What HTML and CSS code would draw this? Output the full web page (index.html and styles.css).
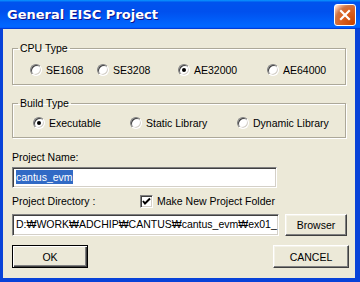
FILE: index.html
```html
<!DOCTYPE html>
<html lang="en">
  <head>
    <meta charset="UTF-8" />
    <title>General EISC Project</title>
    <link rel="stylesheet" href="styles.css">
  </head>
  <body>
    <div class="window">
      <div class="titlebar">
        <span class="title">General EISC Project</span>
        <button class="close" aria-label="Close">
          <svg width="12" height="12" viewBox="0 0 12 12"><path d="M2 2 L10 10 M10 2 L2 10" stroke="#fff" stroke-width="2.2" stroke-linecap="square"/></svg>
        </button>
      </div>

      <div class="client">
        <!-- CPU Type -->
        <fieldset class="group cpu">
          <legend>CPU Type</legend>
          <div class="options">
            <label class="opt"><span class="radio"></span>SE1608</label>
            <label class="opt"><span class="radio"></span>SE3208</label>
            <label class="opt"><span class="radio on"></span>AE32000</label>
            <label class="opt"><span class="radio"></span>AE64000</label>
          </div>
        </fieldset>

        <!-- Build Type -->
        <fieldset class="group build">
          <legend>Build Type</legend>
          <div class="options">
            <label class="opt"><span class="radio on"></span>Executable</label>
            <label class="opt"><span class="radio"></span>Static Library</label>
            <label class="opt"><span class="radio"></span>Dynamic Library</label>
          </div>
        </fieldset>

        <div class="field-label">Project Name:</div>
        <div class="textbox name-box"><span class="sel">cantus_evm</span></div>

        <div class="dir-row">
          <span class="dir-label">Project Directory :</span>
          <label class="check">
            <span class="checkbox">
              <svg width="9" height="9" viewBox="0 0 9 9"><path d="M1 4 L3 6.5 L8 1.5" fill="none" stroke="#000" stroke-width="2"/></svg>
            </span>
            Make New Project Folder
          </label>
        </div>

        <div class="dir-line">
          <div class="textbox dir-box">D:₩WORK₩ADCHIP₩CANTUS₩cantus_evm₩ex01_</div>
          <button class="btn browse">Browser</button>
        </div>

        <div class="actions">
          <button class="btn default">OK</button>
          <button class="btn">CANCEL</button>
        </div>
      </div>
    </div>
  </body>
</html>
```

FILE: styles.css
```css
body {
  margin: 0;
  padding: 0;
  font-family: 'Liberation Sans', Arial, sans-serif;
  font-size: 10.5px;
  color: #000;
}

.window {
  width: 360px;
  height: 282px;
  background-color: #0842d8;
  display: flex;
  flex-direction: column;
}

.titlebar {
  height: 29px;
  display: flex;
  align-items: center;
  justify-content: space-between;
  padding: 0 4px 0 7px;
  box-sizing: border-box;
  background: linear-gradient(180deg, #0997ff, #0053ee 8%, #0050ee 40%, #0066ff 88%, #0066ff 93%, #005bff 95%, #003dd7 96%, #003dd7);
}

.title {
  color: #fff;
  font-family: 'DejaVu Sans', sans-serif;
  font-weight: bold;
  font-size: 13px;
  text-shadow: 1px 1px #0f1089;
}

.close {
  width: 22px;
  height: 22px;
  margin-top: 1px;
  padding: 0;
  border: 1px solid #fff;
  border-radius: 3px;
  background: radial-gradient(circle at 90% 90%, #cc4600 0%, #dc6527 55%, #cd7546 70%, #ffccb2 90%, #fff 100%);
  display: flex;
  align-items: center;
  justify-content: center;
}

.client {
  flex: 1;
  margin: 0 5px 4px 3px;
  background-color: #ece9d8;
  padding: 12px 0 0 9px;
}

.group {
  margin: 0;
  padding: 0;
  width: 334px;
  box-sizing: border-box;
  border: 1px solid #aca899;
  box-shadow: 1px 1px #fff, inset 1px 1px #fff;
}

.group legend {
  margin-left: 5px;
  padding: 0 2px;
  line-height: 14px;
}

.cpu {
  padding: 8px 0 8px 0;
}

.cpu .options {
  padding-left: 17px;
}

.build {
  margin-top: 11px;
  padding: 6px 0 8px 0;
}

.build .options {
  padding-left: 20px;
}

.options {
  display: flex;
}

.opt {
  display: flex;
  align-items: center;
  gap: 4px;
  height: 13px;
}

.cpu .opt:nth-child(1) { width: 67px; }
.cpu .opt:nth-child(2) { width: 81px; }
.cpu .opt:nth-child(3) { width: 89px; }
.build .opt:nth-child(1) { width: 97px; }
.build .opt:nth-child(2) { width: 107px; }

.radio {
  width: 12px;
  height: 12px;
  box-sizing: border-box;
  border-radius: 50%;
  background-color: #fff;
  border: 1px solid;
  border-color: #808080 #fff #fff #808080;
  box-shadow: inset 1px 1px #404040, inset -1px -1px #d4d0c8;
  display: flex;
  align-items: center;
  justify-content: center;
}

.radio.on::after {
  content: '';
  width: 4px;
  height: 4px;
  border-radius: 50%;
  background-color: #000;
}

.field-label {
  margin-top: 12px;
  line-height: 14px;
}

.textbox {
  height: 21px;
  box-sizing: border-box;
  background-color: #fff;
  border: 1px solid;
  border-color: #808080 #fff #fff #808080;
  box-shadow: inset 1px 1px #404040, inset -1px -1px #d4d0c8;
  padding: 2px 3px;
  line-height: 15px;
  white-space: nowrap;
  overflow: hidden;
}

.name-box {
  width: 265px;
  margin-top: 3px;
}

.sel {
  background-color: #316ac5;
  color: #fff;
  padding: 1px 0;
}

.dir-row {
  margin-top: 6px;
  display: flex;
  align-items: center;
  height: 14px;
}

.dir-label {
  width: 128px;
}

.check {
  display: flex;
  align-items: center;
  gap: 4px;
}

.checkbox {
  width: 13px;
  height: 13px;
  box-sizing: border-box;
  background-color: #fff;
  border: 1px solid;
  border-color: #808080 #fff #fff #808080;
  box-shadow: inset 1px 1px #404040, inset -1px -1px #d4d0c8;
  display: flex;
  align-items: center;
  justify-content: center;
}

.dir-line {
  margin-top: 6px;
  display: flex;
  gap: 6px;
}

.dir-box {
  width: 267px;
  height: 22px;
  padding-right: 1px;
}

.btn {
  font-family: 'Liberation Sans', Arial, sans-serif;
  font-size: 10.5px;
  color: #000;
  background-color: #ece9d8;
  border: 1px solid;
  border-color: #fff #404040 #404040 #fff;
  box-shadow: inset -1px -1px #808080, inset 1px 1px #f4f2e8;
  padding: 0;
}

.browse {
  width: 62px;
  height: 22px;
}

.actions {
  margin-top: 9px;
  display: flex;
  justify-content: space-between;
  width: 337px;
}

.actions .btn {
  width: 76px;
  height: 23px;
}

.actions .default {
  border-color: #000;
  box-shadow: inset 1px 1px #fff, inset -1px -1px #404040, inset -2px -2px #808080;
}
```
